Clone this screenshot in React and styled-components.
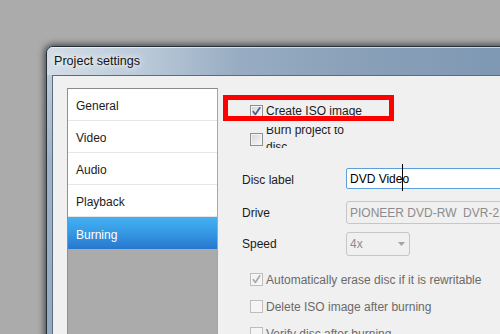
import React from 'react';
import styled, { createGlobalStyle } from 'styled-components';

const Global = createGlobalStyle`
  html, body { margin: 0; padding: 0; }
  body { background: #ababab; font-family: "Liberation Sans", Arial, sans-serif; }
`;

const Page = styled.div`
  width: 500px;
  height: 334px;
  overflow: hidden;
  box-sizing: border-box;
  padding: 46px 0 0 46px;
  background: #ababab;
`;

const Window = styled.div`
  width: 480px;
  height: 310px;
  flex: none;
  display: flex;
  flex-direction: column;
  border: 1px solid #26303a;
  border-radius: 7px 7px 0 0;
  box-shadow: 0 0 6px 2px rgba(0, 0, 0, 0.55);
  overflow: hidden;
`;

const TitleBar = styled.div`
  height: 28px;
  flex: none;
  display: flex;
  align-items: center;
  padding-left: 7px;
  background: linear-gradient(90deg, #d3dde7 0px, #bccbda 90px, #98adc3 190px, #8aa1b9 300px, #7e97b2 470px);
  box-shadow: inset 0 1px 0 rgba(255, 255, 255, 0.6);
  font-size: 12.6px;
  color: #141414;
  text-shadow: 0 0 6px #fff, 0 0 10px rgba(255, 255, 255, 0.9);
`;

const Frame = styled.div`
  flex: 1;
  display: flex;
  padding-left: 5px;
  background: linear-gradient(180deg, #bdcad8 0%, #9fb3c8 30%, #92a9c1 100%);
`;

const Client = styled.div`
  flex: 1;
  display: flex;
  align-items: stretch;
  padding: 12px 0 0 14px;
  background: #f0f0f0;
  border-left: 1px solid #5a6c80;
  border-top: 1px solid #5a6c80;
`;

const Sidebar = styled.div`
  width: 151px;
  flex: none;
  box-sizing: border-box;
  display: flex;
  flex-direction: column;
  border: 1px solid #a6a6a6;
  border-top-color: #8a8a8a;
  border-left-color: #909090;
  background: #ababab;
`;

const NavItem = styled.div`
  height: 32px;
  box-sizing: border-box;
  display: flex;
  align-items: center;
  padding: 3px 0 0 8px;
  font-size: 12px;
  color: ${(p) => (p.$active ? '#ffffff' : '#1b1b1b')};
  background: ${(p) => (p.$active ? 'linear-gradient(180deg, #45b1f4 0%, #3598e4 50%, #2877cd 100%)' : '#ffffff')};
  border-bottom: ${(p) => (p.$active ? 'none' : '1px solid #e6e6e6')};
`;

const Panel = styled.div`
  flex: 1;
  min-width: 0;
  display: flex;
  flex-direction: column;
  padding: 7px 0 0 5px;
  font-size: 12px;
  color: #1b1b1b;
`;

const Highlight = styled.div`
  width: 171px;
  height: 26px;
  box-sizing: border-box;
  border: 5px solid #ff0000;
  overflow: hidden;
  padding-left: 22px;
  display: flex;
  align-items: flex-start;
`;

const Box = styled.span`
  width: 13px;
  height: 13px;
  flex: none;
  box-sizing: border-box;
  display: flex;
  align-items: center;
  justify-content: center;
  margin-top: ${(p) => p.$mt || 0}px;
  border: 1px solid ${(p) => (p.$disabled ? '#bdbdbd' : '#8e8f8f')};
  background: ${(p) => (p.$disabled ? '#f4f4f4' : 'linear-gradient(135deg, #d4d4d4 0%, #ebebeb 60%, #f7f7f7 100%)')};
  box-shadow: inset 0 0 0 1px ${(p) => (p.$disabled ? '#f7f7f7' : '#f4f4f4')};
`;

const CheckLabel = styled.span`
  margin-left: 3px;
  line-height: ${(p) => p.$lh || 20}px;
  color: ${(p) => p.$color || '#1b1b1b'};
  white-space: nowrap;
`;

const BurnRow = styled.div`
  margin: 6px 0 0 27px;
  height: 21px;
  overflow: hidden;
  display: flex;
  align-items: flex-start;
`;

const WrapLabel = styled.span`
  width: 90px;
  margin: -5px 0 0 3px;
  line-height: 17px;
  color: #1b1b1b;
`;

const FormRow = styled.div`
  display: flex;
  align-items: center;
  margin: ${(p) => p.$mt}px 0 0 19px;
  height: ${(p) => p.$h}px;
`;

const FieldLabel = styled.span`
  width: 104px;
  flex: none;
  padding-top: ${(p) => p.$pt || 0}px;
  color: #1b1b1b;
`;

const TextBox = styled.div`
  position: relative;
  width: 200px;
  height: 100%;
  flex: none;
  box-sizing: border-box;
  display: flex;
  align-items: center;
  padding-left: 3px;
  background: #ffffff;
  border: 1px solid #5a9fe0;
  border-radius: 2px;
  color: #000;
`;

const IBeam = styled.span`
  position: absolute;
  left: 55px;
  top: -5px;
  width: 1px;
  height: 27px;
  background: #000;
`;

const DisabledBox = styled.div`
  width: ${(p) => p.$w}px;
  height: 100%;
  flex: none;
  box-sizing: border-box;
  display: flex;
  align-items: center;
  justify-content: space-between;
  padding: 0 4px 0 3px;
  border: 1px solid #c6c6c6;
  border-radius: 3px;
  background: #f0f0f0;
  color: #8c8c8c;
  white-space: pre;
`;

const OptionRow = styled.div`
  height: 27px;
  display: flex;
  align-items: center;
  margin: ${(p) => p.$mt || 0}px 0 0 27px;
`;

function Check({ checked, disabled, mt }) {
  return (
    <Box $disabled={disabled} $mt={mt}>
      {checked && (
        <svg width="11" height="11" viewBox="0 0 11 11">
          <path
            d="M2.2 5.6 L4.3 8.4 L8.8 1.8"
            fill="none"
            stroke={disabled ? '#a9a9a9' : '#4a5f8f'}
            strokeWidth="1.7"
            strokeLinecap="round"
            strokeLinejoin="round"
          />
        </svg>
      )}
    </Box>
  );
}

const navItems = ['General', 'Video', 'Audio', 'Playback', 'Burning'];

export default function App() {
  return (
    <Page>
      <Global />
      <Window>
        <TitleBar>Project settings</TitleBar>
        <Frame>
          <Client>
            <Sidebar>
              {navItems.map((n) => (
                <NavItem key={n} $active={n === 'Burning'}>{n}</NavItem>
              ))}
            </Sidebar>
            <Panel>
              <Highlight>
                <Check checked mt={5} />
                <CheckLabel $lh={22}>Create ISO image</CheckLabel>
              </Highlight>
              <BurnRow>
                <Check mt={6} />
                <WrapLabel>Burn project to disc</WrapLabel>
              </BurnRow>
              <FormRow $mt={20} $h={21}>
                <FieldLabel $pt={2}>Disc label</FieldLabel>
                <TextBox>
                  DVD Video
                  <IBeam />
                </TextBox>
              </FormRow>
              <FormRow $mt={12} $h={23}>
                <FieldLabel>Drive</FieldLabel>
                <DisabledBox $w={200}>PIONEER DVD-RW  DVR-219L</DisabledBox>
              </FormRow>
              <FormRow $mt={8} $h={24}>
                <FieldLabel>Speed</FieldLabel>
                <DisabledBox $w={64}>
                  4x
                  <svg width="7" height="4" viewBox="0 0 7 4">
                    <path d="M0 0 H7 L3.5 4 Z" fill="#a3a3a3" />
                  </svg>
                </DisabledBox>
              </FormRow>
              <OptionRow $mt={10}>
                <Check checked disabled />
                <CheckLabel $color="#6a6a6a">Automatically erase disc if it is rewritable</CheckLabel>
              </OptionRow>
              <OptionRow>
                <Check disabled />
                <CheckLabel $color="#6a6a6a">Delete ISO image after burning</CheckLabel>
              </OptionRow>
              <OptionRow>
                <Check disabled />
                <CheckLabel $color="#6a6a6a">Verify disc after burning</CheckLabel>
              </OptionRow>
            </Panel>
          </Client>
        </Frame>
      </Window>
    </Page>
  );
}
